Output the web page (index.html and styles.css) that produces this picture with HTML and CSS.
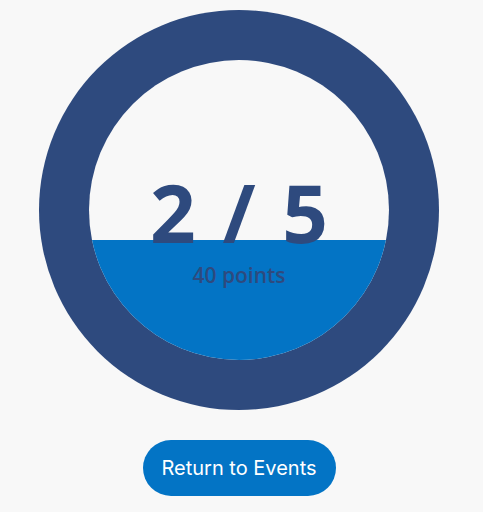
FILE: index.html
```html
<!DOCTYPE html>
<html>
<head>
<meta charset="utf-8">
<link rel="stylesheet" href="styles.css">
</head>
<body>
<main class="page">
  <div class="gauge">
    <div class="gauge-inner">
      <div class="water" style="height: 40%"></div>
      <div class="score">
        <div class="score-main">2 / 5</div>
        <div class="score-points">40 points</div>
      </div>
    </div>
  </div>
  <button class="return-btn">Return to Events</button>
</main>
</body>
</html>
```
FILE: styles.css
```css
html, body {
  margin: 0;
  padding: 0;
  background: #f8f8f8;
}
.page {
  display: flex;
  flex-direction: column;
  align-items: center;
  gap: 30px;
  padding: 10px 5px 0 0;
}
.gauge {
  width: 400px;
  height: 400px;
  box-sizing: border-box;
  padding: 50px;
  border-radius: 50%;
  background: #2e4a7e;
}
.gauge-inner {
  position: relative;
  width: 300px;
  height: 300px;
  border-radius: 50%;
  overflow: hidden;
  background: #f8f8f8;
}
.water {
  position: absolute;
  left: 0;
  right: 0;
  bottom: 0;
  background: #0374c5;
}
.score {
  position: relative;
  display: flex;
  flex-direction: column;
  align-items: center;
  padding-top: 112px;
  gap: 11px;
  color: #2e4a7e;
  font-family: "Open Sans", sans-serif;
}
.score-main {
  font-size: 80px;
  line-height: 80px;
  font-weight: 700;
  word-spacing: 6px;
}
.score-points {
  font-size: 21px;
  line-height: 24px;
  font-weight: 600;
}
.return-btn {
  width: 193px;
  height: 56px;
  border: none;
  border-radius: 28px;
  background: #0374c5;
  color: #ffffff;
  font-family: "Inter", sans-serif;
  font-size: 20px;
  font-weight: 400;
  padding: 0;
}
```
